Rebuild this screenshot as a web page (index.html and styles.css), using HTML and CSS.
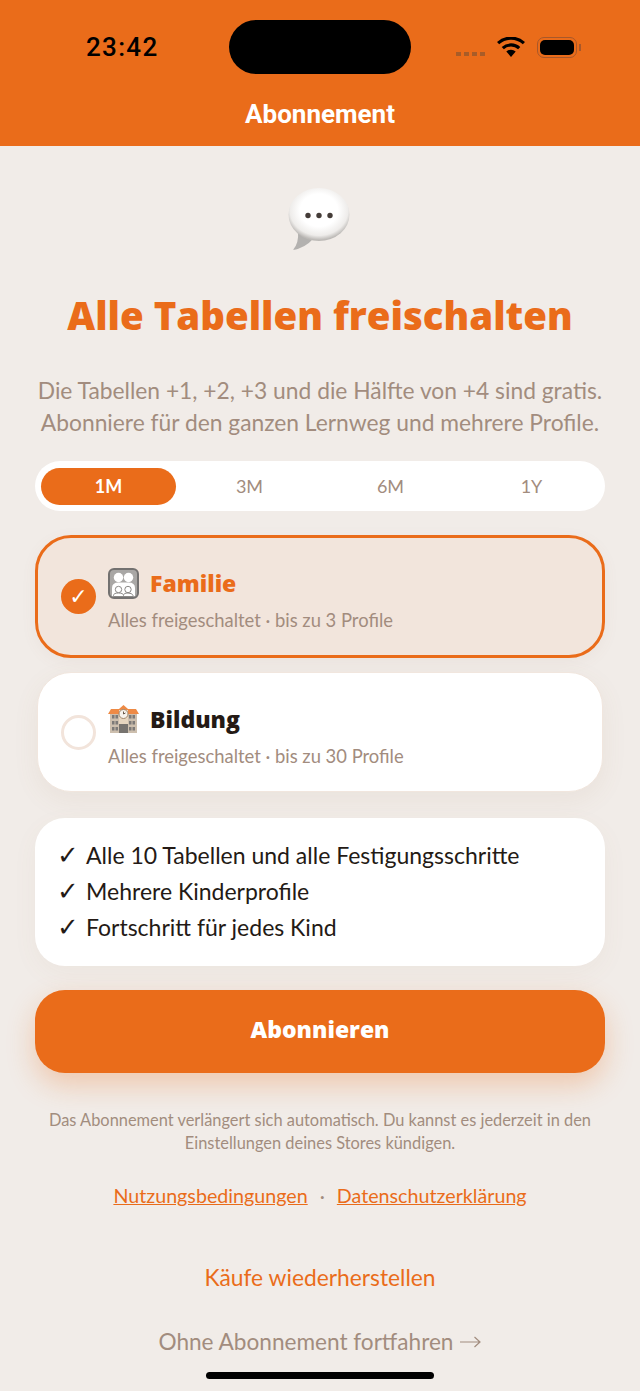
FILE: index.html
```html
<!doctype html>
<html lang="de">
<head>
	<meta charset="UTF-8">
	<title>Abonnement</title>
	<link rel="stylesheet" href="styles.css">
</head>
<body>
	<header class="topbar">
		<div class="status">
			<span class="clock">23:42</span>
			<span class="island"></span>
			<span class="status-icons">
				<span class="signal"><i></i><i></i><i></i><i></i></span>
				<svg class="wifi" width="28" height="20" viewBox="0 0 28 20">
					<path d="M14 20 9.300 14.500a7 7 0 0 1 9.400 0Z" fill="#000"/>
					<path d="M5.800 11.200a12 12 0 0 1 16.400 0" fill="none" stroke="#000" stroke-width="3.200"/>
					<path d="M1.100 6.200a19 19 0 0 1 25.800 0" fill="none" stroke="#000" stroke-width="3.200"/>
				</svg>
				<span class="battery"><b></b></span>
				<span class="battery-cap"></span>
			</span>
		</div>
		<div class="title">Abonnement</div>
	</header>

	<main class="page">
		<svg class="bubble" width="62" height="62" viewBox="0 0 62 62">
			<defs>
				<radialGradient id="bubbleFill" cx="50%" cy="42%" r="56%">
					<stop offset="0.55" stop-color="#fff"/>
					<stop offset="0.85" stop-color="#eeecea"/>
					<stop offset="1" stop-color="#bdbab7"/>
				</radialGradient>
			</defs>
			<path d="M10 44 Q11 55 5 62 Q17 60 25 51Z" fill="#b3b1af"/>
			<ellipse cx="31" cy="26.500" rx="30.500" ry="26.500" fill="url(#bubbleFill)"/>
			<circle cx="20" cy="27.500" r="2.700" fill="#443c38"/>
			<circle cx="31" cy="27.500" r="2.700" fill="#443c38"/>
			<circle cx="42" cy="27.500" r="2.700" fill="#443c38"/>
		</svg>

		<h1 class="headline">Alle Tabellen freischalten</h1>
		<p class="intro">Die Tabellen +1, +2, +3 und die Hälfte von +4 sind gratis.<br>Abonniere für den ganzen Lernweg und mehrere Profile.</p>

		<div class="periods">
			<span class="period active">1M</span>
			<span class="period">3M</span>
			<span class="period">6M</span>
			<span class="period">1Y</span>
		</div>

		<section class="plan selected">
			<span class="radio">✓</span>
			<div class="plan-text">
				<div class="plan-name">
					<svg class="plan-icon" width="31" height="31" viewBox="0 0 31 31">
						<rect x="1" y="1" width="29" height="29" rx="5" fill="#a9a7a5" stroke="#737170" stroke-width="2"/>
						<circle cx="10.500" cy="9.500" r="4.700" fill="#fff"/>
						<circle cx="20.500" cy="9.500" r="4.700" fill="#fff"/>
						<path d="M4 28V20q0-5.500 6.500-5.500h10q6.500 0 6.500 5.500v8Z" fill="#fff"/>
						<circle cx="10.500" cy="21.500" r="3.200" fill="#fff" stroke="#8b8987"/>
						<circle cx="20" cy="21.500" r="3.200" fill="#fff" stroke="#8b8987"/>
						<path d="M5.500 28.500v-1q0-2.500 5-2.500t5 2.500q0-2.500 4.500-2.500t5 2.500v1Z" fill="#fff" stroke="#8b8987"/>
					</svg>
					<span>Familie</span>
				</div>
				<div class="plan-info">Alles freigeschaltet · bis zu 3 Profile</div>
			</div>
		</section>

		<section class="plan other">
			<span class="radio"></span>
			<div class="plan-text">
				<div class="plan-name">
					<svg class="plan-icon" width="31" height="31" viewBox="0 0 31 31">
						<rect x="2" y="9" width="27" height="21" fill="#cdbfae"/>
						<path d="M0 11 3 6h8l4.500-4L20 6h8l3 5Z" fill="#ee8a45"/>
						<rect x="11" y="7" width="9" height="14" fill="#e6d5bf"/>
						<circle cx="15.500" cy="11" r="4.500" fill="#f6f2ec" stroke="#a1866a"/>
						<path d="M15.500 8.500v2.500l2-1" fill="none" stroke="#6b5a4a"/>
						<path d="M4 12h2.500v3.500H4zM7.500 12H10v3.500H7.500zM4 18h2.500v3.500H4zM7.500 18H10v3.500H7.500zM4 24h2.500v3.500H4zM7.500 24H10v3.500H7.500zM21 12h2.500v3.500H21zM24.500 12H27v3.500h-2.500zM21 18h2.500v3.500H21zM24.500 18H27v3.500h-2.500zM21 24h2.500v3.500H21zM24.500 24H27v3.500h-2.500z" fill="#7d7a78"/>
						<rect x="11" y="21" width="9" height="9" fill="#77736f"/>
					</svg>
					<span>Bildung</span>
				</div>
				<div class="plan-info">Alles freigeschaltet · bis zu 30 Profile</div>
			</div>
		</section>

		<ul class="features">
			<li>Alle 10 Tabellen und alle Festigungsschritte</li>
			<li>Mehrere Kinderprofile</li>
			<li>Fortschritt für jedes Kind</li>
		</ul>

		<button class="subscribe">Abonnieren</button>

		<p class="legal">Das Abonnement verlängert sich automatisch. Du kannst es jederzeit in den Einstellungen deines Stores kündigen.</p>

		<div class="links">
			<a href="#">Nutzungsbedingungen</a>
			<span class="dot">·</span>
			<a href="#">Datenschutzerklärung</a>
		</div>

		<div class="restore">Käufe wiederherstellen</div>
		<div class="skip">
			Ohne Abonnement fortfahren
			<svg class="arrow" width="21" height="12" viewBox="0 0 21 12">
				<path d="M0 6h20M14.500 1l5.500 5-5.500 5" fill="none" stroke="#a28c7e" stroke-width="1.200"/>
			</svg>
		</div>
	</main>
	<div class="home-bar"></div>
</body>
</html>
```

FILE: styles.css
```css
html, body {margin: 0; height: 100%;}
body {
	position: relative;
	height: 1391px;
	overflow: hidden;
	background: #f1ece8;
	font-family: "Lato", "Noto Sans", sans-serif;
	color: #241a15;
}

.topbar {
	height: 146px;
	box-sizing: border-box;
	padding-top: 20px;
	background: #ea6c1a;
}
.status {
	display: flex;
	align-items: center;
	height: 54px;
	padding: 0 59px 0 86px;
}
.clock {
	width: 143px;
	font: 500 26px "Roboto", sans-serif;
	letter-spacing: 1.300px;
	color: #000;
}
.island {
	width: 182px;
	height: 54px;
	border-radius: 27px;
	background: #000;
}
.status-icons {
	display: flex;
	align-items: center;
	margin-left: auto;
}
.signal {display: flex; gap: 3px; margin-top: 13px; margin-right: 12px;}
.signal i {width: 5px; height: 4px; background: #a85c28;}
.wifi {margin-right: 12px; margin-top: -1px;}
.battery {
	display: block;
	width: 40px;
	height: 21px;
	box-sizing: border-box;
	padding: 2px;
	border: 1.500px solid #a8582a;
	border-radius: 7px;
}
.battery b {display: block; height: 100%; border-radius: 5px; background: #000;}
.battery-cap {width: 2px; height: 7px; margin-left: 2px; background: #a8582a;}
.title {
	margin-top: 24px;
	text-align: center;
	font: 700 26px/32px "Roboto", sans-serif;
	color: #fff;
}

.page {
	display: flex;
	flex-direction: column;
	padding: 0 35px;
}
.bubble {align-self: center; margin: 42px 2px 0 0;}
.headline {
	margin: 40px -20px 0;
	text-align: center;
	font: 800 38.400px/50px "Open Sans", sans-serif;
	color: #ea6c1a;
}
.intro {
	margin: 34px -10px 0;
	text-align: center;
	font-size: 22.800px;
	line-height: 32px;
	color: #a28c7e;
}

.periods {
	display: grid;
	grid-template-columns: repeat(4, 1fr);
	margin-top: 23px;
	padding: 7px 3px 6px;
	border-radius: 25px;
	background: #fff;
}
.period {
	height: 37px;
	margin: 0 3px;
	border-radius: 19px;
	text-align: center;
	font-size: 18px;
	line-height: 37px;
	color: #a28c7e;
}
.period.active {font-weight: 700; color: #fff; background: #ea6c1a;}

.plan {
	display: flex;
	align-items: center;
	gap: 12px;
	box-sizing: border-box;
}
.plan.selected {
	height: 123px;
	margin-top: 24px;
	padding-left: 23px;
	border: 3px solid #ea6c1a;
	border-radius: 36px;
	background: #f2e5dc;
	box-shadow: 0 4px 16px rgba(150, 110, 80, .06);
}
.plan.other {
	height: 120px;
	margin: 14px 2px 0;
	padding-left: 23px;
	border: 1px solid #f1e6de;
	border-radius: 34px;
	background: #fff;
	box-shadow: 0 8px 26px rgba(150, 110, 80, .08);
}
.radio {
	display: block;
	width: 35px;
	height: 35px;
	box-sizing: border-box;
	flex: none;
	border-radius: 50%;
	text-align: center;
	font: 22px/35px "DejaVu Sans", sans-serif;
	color: #fff;
}
.selected .radio {background: #ea6c1a;}
.other .radio {border: 3px solid #f2e4db;}
.plan-text {padding-top: 6px;}
.plan-name {
	display: flex;
	align-items: center;
	gap: 11px;
	font: 800 23px/32px "Open Sans", sans-serif;
}
.selected .plan-name {color: #ea6c1a;}
.plan-info {
	margin-top: 9px;
	font-size: 18.400px;
	line-height: 24px;
	color: #a28c7e;
}

.features {
	margin: 26px 0 0;
	padding: 19px 22px 21px;
	border-radius: 30px;
	list-style: none;
	background: #fff;
	box-shadow: 0 8px 26px rgba(150, 110, 80, .05);
	font-size: 23px;
	line-height: 36px;
}
.features li:before {
	content: "✓";
	display: inline-block;
	width: 29px;
	font: 26px/1 "DejaVu Sans", sans-serif;
}

.subscribe {
	height: 83px;
	margin-top: 24px;
	padding: 0 0 5px;
	border: 0;
	border-radius: 30px;
	background: #ea6c1a;
	box-shadow: 0 12px 28px rgba(234, 108, 26, .28);
	font: 800 23px "Open Sans", sans-serif;
	color: #fff;
}

.legal {
	margin: 35px 0 0;
	text-align: center;
	font-size: 16.400px;
	line-height: 23px;
	color: #a28c7e;
}
.links {
	display: flex;
	justify-content: center;
	gap: 12px;
	margin-top: 29px;
	font-size: 19.700px;
	line-height: 26px;
}
.links a {color: #ea6c1a;}
.links .dot {color: #a28c7e;}
.restore {
	margin-top: 53px;
	text-align: center;
	font-size: 22.800px;
	line-height: 30px;
	color: #ea6c1a;
}
.skip {
	display: flex;
	justify-content: center;
	align-items: center;
	gap: 7px;
	margin-top: 35px;
	font-size: 22.600px;
	line-height: 30px;
	color: #a28c7e;
}
.home-bar {
	position: absolute;
	left: 206px;
	bottom: 12px;
	width: 228px;
	height: 7px;
	border-radius: 4px;
	background: #000;
}
```
